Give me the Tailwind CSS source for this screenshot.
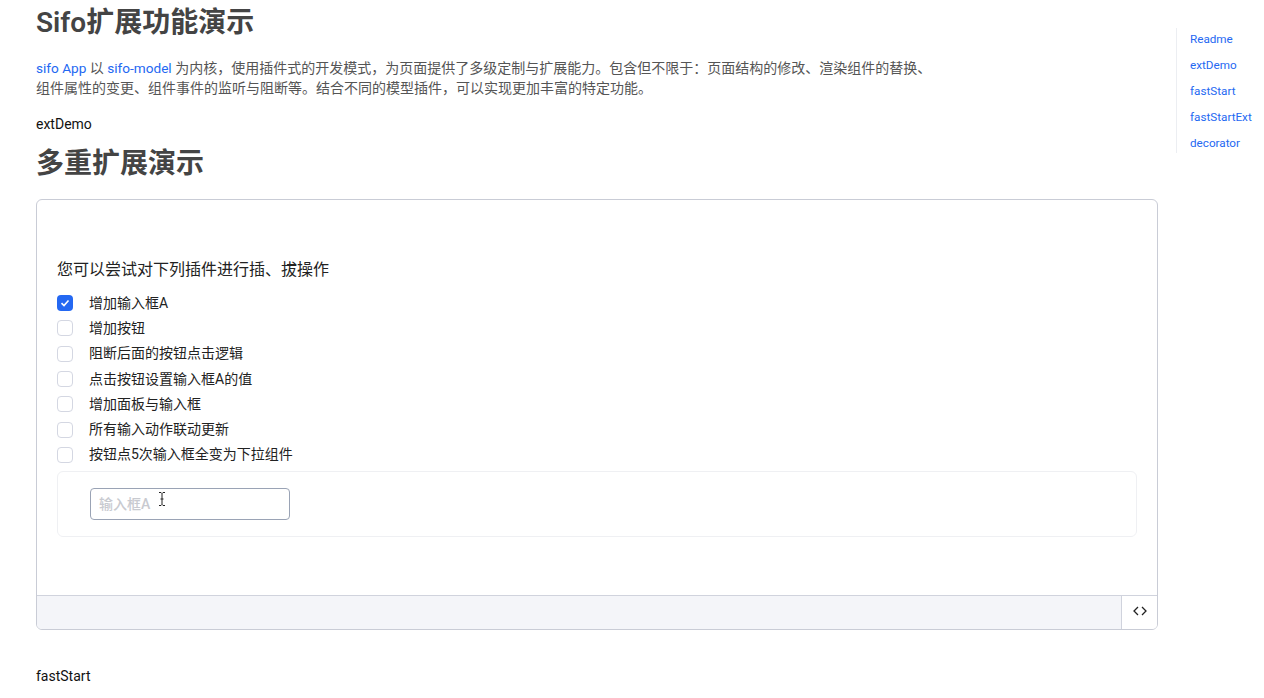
<!DOCTYPE html>
<html lang="zh">
<head>
    <meta charset="UTF-8">
    <title>Sifo扩展功能演示</title>
    <script src="https://cdn.jsdelivr.net/npm/@tailwindcss/browser@4"></script>
</head>
<body class="bg-white h-[698px] overflow-hidden font-['Roboto','Noto_Sans_CJK_SC',sans-serif]">
    <div class="flex">
        <main class="w-[1122px] ml-9 pt-[3px] shrink-0">
            <h1 class="text-[28px] leading-[40px] h-[42px] font-semibold text-[#444]">Sifo扩展功能演示</h1>
            <p class="mt-[13px] text-[14px] leading-[20px] w-[900px] text-[#555]"><a class="text-[13.6px] text-[#2468f2]">sifo App</a> 以 <a class="text-[13.6px] text-[#2468f2]">sifo-model</a> 为内核，使用插件式的开发模式，为页面提供了多级定制与扩展能力。包含但不限于：页面结构的修改、渲染组件的替换、组件属性的变更、组件事件的监听与阻断等。结合不同的模型插件，可以实现更加丰富的特定功能。</p>
            <p class="mt-[16px] text-[14px] leading-[21px] text-[#111]">extDemo</p>
            <h2 class="mt-[9px] text-[28px] leading-[40px] font-semibold text-[#444]">多重扩展演示</h2>

            <section class="mt-[15px] h-[431px] border border-[#c9ccd6] rounded-[6px] flex flex-col overflow-hidden">
                <div class="flex-1 px-5 pt-[51px]">
                    <h3 class="text-[16px] leading-[38px] text-[#222]">您可以尝试对下列插件进行插、拔操作</h3>
                    <ul class="mt-[1.500px] text-[14px] text-[#222]">
                        <li class="flex items-center h-[25.3px]">
                            <span class="w-4 h-4 rounded-[4px] bg-[#2468f2] flex items-center justify-center">
                                <svg width="10" height="10" viewBox="0 0 10 10" fill="none" stroke="white" stroke-width="1.6"><path d="M1.5 5.2 4 7.5 8.5 2.5"/></svg>
                            </span>
                            <span class="ml-4">增加输入框A</span>
                        </li>
                        <li class="flex items-center h-[25.3px]"><span class="w-4 h-4 rounded-[4px] border border-[#d4d7e2]"></span><span class="ml-4">增加按钮</span></li>
                        <li class="flex items-center h-[25.3px]"><span class="w-4 h-4 rounded-[4px] border border-[#d4d7e2]"></span><span class="ml-4">阻断后面的按钮点击逻辑</span></li>
                        <li class="flex items-center h-[25.3px]"><span class="w-4 h-4 rounded-[4px] border border-[#d4d7e2]"></span><span class="ml-4">点击按钮设置输入框A的值</span></li>
                        <li class="flex items-center h-[25.3px]"><span class="w-4 h-4 rounded-[4px] border border-[#d4d7e2]"></span><span class="ml-4">增加面板与输入框</span></li>
                        <li class="flex items-center h-[25.3px]"><span class="w-4 h-4 rounded-[4px] border border-[#d4d7e2]"></span><span class="ml-4">所有输入动作联动更新</span></li>
                        <li class="flex items-center h-[25.3px]"><span class="w-4 h-4 rounded-[4px] border border-[#d4d7e2]"></span><span class="ml-4">按钮点5次输入框全变为下拉组件</span></li>
                    </ul>
                    <div class="mt-[3.500px] h-[66px] border border-[#eff0f3] rounded-[6px] pl-[32px] pt-[16px]">
                        <div class="relative w-[200px] h-[32px] border border-[#9aa3b5] rounded-[4px] pl-2 flex items-center text-[14px] font-medium text-[#c8cad0]">
                            输入框A
                            <svg class="absolute left-[67px] top-[2px]" width="8" height="16" viewBox="0 0 8 16" fill="none" stroke="#222" stroke-width="1"><path d="M1 1.500h2l1 1 1-1h2M4 2.500v11M1 14.500h2l1-1 1 1h2M2.500 8h3"/></svg>
                        </div>
                    </div>
                </div>
                <div class="h-[34px] bg-[#f4f5f9] border-t border-[#d0d3dd] flex justify-end shrink-0">
                    <div class="w-[36px] pb-[4px] bg-white border-l border-[#d0d3dd] flex items-center justify-center">
                        <svg width="14" height="10" viewBox="0 0 14 10" fill="none" stroke="#222" stroke-width="1.300"><path d="M5 1 1 5l4 4M9 1l4 4-4 4"/></svg>
                    </div>
                </div>
            </section>

            <p class="mt-[36px] text-[14px] leading-[21px] text-[#111]">fastStart</p>
        </main>

        <nav class="ml-[18px] mt-[28px] h-[125px] border-l border-[#eceef2] pl-[13px] text-[11.700px] text-[#2468f2]">
            <div class="-mt-[2px] flex flex-col">
                <a class="h-[26px] leading-[26px]">Readme</a>
                <a class="h-[26px] leading-[26px]">extDemo</a>
                <a class="h-[26px] leading-[26px]">fastStart</a>
                <a class="h-[26px] leading-[26px]">fastStartExt</a>
                <a class="h-[26px] leading-[26px]">decorator</a>
            </div>
        </nav>
    </div>
</body>
</html>
